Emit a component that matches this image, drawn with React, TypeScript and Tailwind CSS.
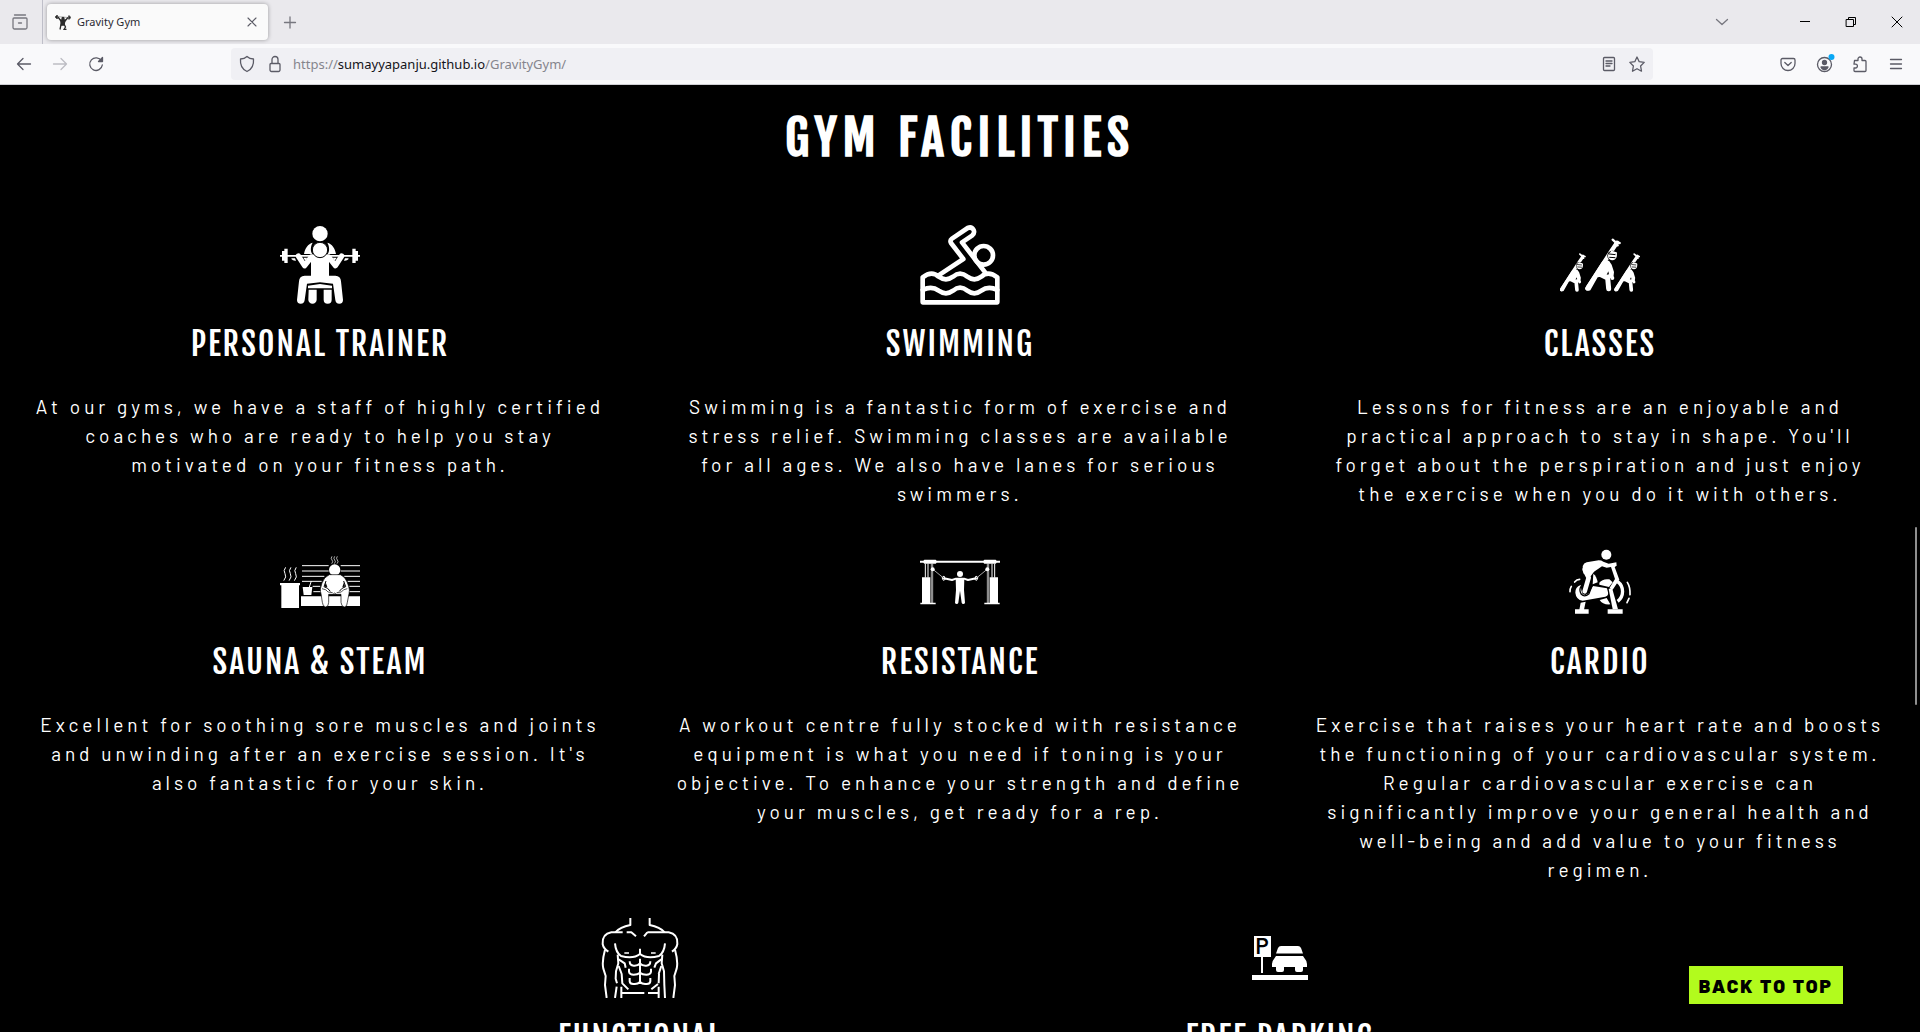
import type { ReactNode } from "react";

function TrainerIcon() {
  return (
    <svg viewBox="300 42 240 240" className="size-20" fill="white" aria-hidden="true">
      <circle cx="420" cy="71" r="23" />
      <path d="M372 132C375 114 384 102 398 98C391 110 391 124 397 132ZM468 132C465 114 456 102 442 98C449 110 449 124 443 132Z" />
      <path d="M300 135H540V140H300Z" />
      <path d="M306 123h7v29h-7zM313 116h10v43h-10zM517 116h10v43h-10zM527 123h7v29h-7z" />
      <path d="M335 145l10 0 3 7q-9 1-14-5zM505 145l-10 0-3 7q9 1 14-5zM370 143h12l-6 9zM470 143h-12l6 9z" />
      <path d="M355 138L374 167L394 141H446L466 167L485 138" fill="none" stroke="white" strokeWidth="16" strokeLinecap="round" strokeLinejoin="round" />
      <path d="M393 136h54v66h-54z" />
      <path d="M393 197H374Q358 198 357 214L351 270Q351 281 362 281Q373 281 374 270L381 221L420 217L459 221L466 270Q467 281 478 281Q489 281 489 270L483 214Q482 198 466 197Z" />
      <path d="M384 227L420 222L456 227V235H384Z" />
      <path d="M386 239h24v30a12 12 0 0 1-25 0zM431 239h24v30a12 12 0 0 1-24 0z" />
      <circle cx="420" cy="120" r="23" stroke="black" strokeWidth="3" />
    </svg>
  );
}

function SwimmingIcon() {
  return (
    <svg viewBox="120 42 240 240" className="size-20 overflow-visible" fill="none" stroke="white" strokeWidth="14" strokeLinecap="round" strokeLinejoin="round" aria-hidden="true">
      <circle cx="311" cy="136" r="28" />
      <path d="M179 194L250 147L213 99Q209 91 216 86L263 54Q275 49 281 60Q285 70 276 77L246 97L316 188" />
      <path d="M128 277V202Q155 181 176 200Q198 216 219 200Q240 182 262 200Q283 216 304 200Q325 181 352 202V277Z" />
      <path d="M128 240Q155 226 176 242Q198 258 219 242Q240 224 262 242Q283 258 304 242Q325 226 352 240" />
    </svg>
  );
}

function Stretcher({ x, y, s }: { x: number; y: number; s: number }) {
  return (
    <g transform={`translate(${x} ${y}) scale(${s})`} strokeLinecap="round" strokeLinejoin="round">
      <path d="M7 149L80 36L96 12" fill="none" stroke="white" strokeWidth="13" />
      <path d="M83 3L92 11L104 13M98 20L92 12" fill="none" stroke="white" strokeWidth="7" />
      <path d="M4 142L52 68L72 66L80 78L87 100L85 118L72 118L48 114L38 116L16 155Q2 160 1 149Z" />
      <path d="M48 108L68 118L71 150" fill="none" stroke="white" strokeWidth="15" />
      <path d="M70 98L65 108L72 107Z" fill="black" />
      <circle cx="82" cy="118" r="6" />
      <circle cx="82" cy="51" r="15" fill="black" />
      <circle cx="82" cy="52" r="13" />
      <path d="M73 46L92 48M74 56L90 57" stroke="black" strokeWidth="3" />
      <path d="M79 38L94 43L93 52" fill="none" stroke="white" strokeWidth="4" />
    </g>
  );
}

function ClassesIcon() {
  return (
    <svg viewBox="120 42 240 240" className="size-20" fill="white" aria-hidden="true">
      <Stretcher x={119} y={130} s={0.73} />
      <Stretcher x={195} y={86} s={1} />
      <Stretcher x={282} y={130} s={0.73} />
    </svg>
  );
}

function SaunaIcon() {
  return (
    <svg viewBox="240 9 240 240" className="size-20" fill="white" aria-hidden="true">
      <g fill="none" stroke="white" strokeWidth="3">
        <path d="M306 80H386M422 80H480M306 96H386M422 96H480M306 112H373M433 112H480M306 127H365M443 127H480M338 142H361M448 142H480M340 158H363M446 158H480" />
        <path d="M256 86q-7 9-1 18t-3 20M272 86q-7 9-1 18t-3 20M288 86q-7 9-1 18t-3 20" strokeLinecap="round" />
        <path d="M396 52q-5 6 0 11t-1 11M404 52q-5 6 0 11t-1 11M412 52q-5 6 0 11t-1 11" strokeWidth="2" />
        <path d="M334 126L328 144" />
      </g>
      <path d="M240 132h60v7h-3v68h-53v-68h-4zM308 144h29l-3 24h-23zM303 172h177v29h-177z" />
      <circle cx="404" cy="93" r="17" />
      <path d="M388 107Q372 114 366 132L361 150Q361 158 363 164L367 190Q368 203 377 204Q386 203 386 190V166H423V190Q424 203 433 204Q442 203 442 190L447 164Q450 154 446 142Q438 114 421 107Z" stroke="black" strokeWidth="2" />
      <path d="M378 126l-6 17q12 3 19 14M431 126l6 17q-12 3-19 14" fill="none" stroke="black" strokeWidth="3" />
      <path d="M377 130l5 14-8-1zM432 130l-5 14 8-1z" fill="black" />
      <path d="M366 149q14 2 18 10l14 2M442 149q-14 2-18 10l-14 2M398 167l6-5 6 5" fill="none" stroke="black" strokeWidth="2" />
    </svg>
  );
}

function ResistanceIcon() {
  return (
    <svg viewBox="150 9 240 240" className="size-20" fill="white" aria-hidden="true">
      <path d="M150 65h240v6h-240zM163 62h34l3 3v6l-3 3h-34l-3-3v-6zM343 62h34l3 3v6l-3 3h-34l-3-3v-6z" />
      <path d="M156 115h25v77h-25zM359 115h25v77h-25zM151 191h46v5h-46zM343 191h46v5h-46z" />
      <path d="M166 74v42M174 74v42M374 74v42M366 74v42" stroke="white" strokeWidth="3" />
      <path d="M184 74v118M188 74v118M352 74v118M356 74v118" stroke="white" strokeWidth="2" />
      <circle cx="188" cy="91" r="6" />
      <circle cx="352" cy="91" r="6" />
      <path d="M190 92L218 115M350 92L322 115" stroke="white" strokeWidth="2" />
      <path d="M222 111l-6 5 4 8 6-3zM318 111l6 5-4 8-6-3z" fill="none" stroke="white" strokeWidth="3" />
      <circle cx="270" cy="105" r="9" />
      <path d="M222 118L246 123L258 119H282L294 123L318 118" fill="none" stroke="white" strokeWidth="6" strokeLinejoin="round" strokeLinecap="round" />
      <path d="M257 117h26l-1 36 3 38q-1 4-5 4t-5-4l-5-36-5 36q-1 4-5 4t-5-4l3-38z" />
    </svg>
  );
}

function CardioIcon() {
  return (
    <svg viewBox="60 9 240 240" className="size-20" fill="white" aria-hidden="true">
      <circle cx="199" cy="47" r="15" />
      <path d="M131 104Q122 74 140 70L176 64Q184 64 190 68L206 74L229 70L230 80L224 84L238 122L218 152L209 146L225 120L213 84L200 86L186 82L162 98L152 112Z" />
      <path d="M134 92L146 116L134 157" fill="none" stroke="white" strokeWidth="14" strokeLinecap="round" strokeLinejoin="round" />
      <path d="M160 104Q170 112 173 130L158 136Z" />
      <path d="M233 128A37 37 0 0 1 233 187" fill="none" stroke="white" strokeWidth="10" />
      <path d="M178 131Q188 118 208 121L218 130L207 144L178 137ZM179 183L200 177L211 196Q188 198 179 183Z" />
      <path d="M122 138Q105 145 106 161Q108 182 128 185L196 173Q206 171 204 160L201 148L159 141L146 163L137 168L128 166L124 154Z" />
      <path d="M123 142Q116 153 124 166Q134 176 147 164L156 140" fill="none" stroke="black" strokeWidth="4" />
      <path d="M206 150L216 146L234 211H218Z" />
      <path d="M122 191L137 188L132 212H118ZM105 211h41v13h-41zM203 211h45v13h-45z" />
      <path d="M104 129Q110 121 119 121M90 158Q89 150 94 142M262 130Q271 144 270 167M267 178L261 191" fill="none" stroke="white" strokeWidth="5" strokeLinecap="round" />
    </svg>
  );
}

function FunctionalIcon() {
  return (
    <svg viewBox="180 54 240 240" className="size-20" fill="none" stroke="white" strokeWidth="6" strokeLinejoin="round" aria-hidden="true">
      <path d="M271 54V75Q240 81 226 97M329 54V75Q360 81 374 97" />
      <path d="M248 97H214Q186 102 188 132Q190 145 205 155M322 97H386Q414 102 412 132Q410 145 396 155M260 97H274L288 109M322 97L312 109" />
      <path d="M195 149Q185 185 190 206L197 228L195 255L200 294M405 149Q415 185 410 206L403 228L405 255L400 294" />
      <path d="M225 130Q227 157 243 168Q280 178 300 162Q320 178 357 168Q373 157 375 130M300 146V163" />
      <path d="M233 164L235 190L228 214L227 236L231 250M367 164L365 190L372 214L373 255L375 294M230 260L225 294M357 222L356 250" />
      <path d="M236 178L254 190L257 203M236 198L245 222L247 250L265 268M364 178L348 190L343 203M364 198L356 222M354 252L334 268" />
      <path d="M300 176V252M269 184Q269 197 281 197Q293 198 300 190Q307 198 319 197Q331 197 331 184M267 206V215Q269 224 281 224Q293 224 300 218Q307 224 319 224Q331 224 333 215V206M269 234V244Q270 253 282 252Q293 253 300 246Q307 253 318 252Q330 253 331 244V234" />
      <path d="M244 260V294M356 260V294M244 279H313M324 279H356" />
      <path d="M253 159H267M333 159H347" strokeWidth="5" />
    </svg>
  );
}

function ParkingIcon() {
  return (
    <svg viewBox="0 0 80 80" className="size-20" fill="white" aria-hidden="true">
      <path d="M14 18h17v21h-17zM21 39h2v16h-2zM12 57h56v5h-56z" />
      <path d="M41 28H58Q60 28 61 30L63 35.500H36L38 30Q39 28 41 28Z" />
      <path d="M36 38H63L65 41Q67 43 67 46V49H63V52Q63 54 61 54H57Q55 54 55 52V49H44V52Q44 54 42 54H38Q36 54 36 52V49H32V46Q32 43 34 41Z" />
      <text x="22" y="36" textAnchor="middle" fill="black" fontFamily="Barlow, sans-serif" fontWeight="600" fontSize="22">P</text>
    </svg>
  );
}

type Facility = { title: string; text: string; icon: ReactNode };

const facilities: Facility[] = [
  { title: "PERSONAL TRAINER", icon: <TrainerIcon />, text: "At our gyms, we have a staff of highly certified coaches who are ready to help you stay motivated on your fitness path." },
  { title: "SWIMMING", icon: <SwimmingIcon />, text: "Swimming is a fantastic form of exercise and stress relief. Swimming classes are available for all ages. We also have lanes for serious swimmers." },
  { title: "CLASSES", icon: <ClassesIcon />, text: "Lessons for fitness are an enjoyable and practical approach to stay in shape. You'll forget about the perspiration and just enjoy the exercise when you do it with others." },
  { title: "SAUNA & STEAM", icon: <SaunaIcon />, text: "Excellent for soothing sore muscles and joints and unwinding after an exercise session. It's also fantastic for your skin." },
  { title: "RESISTANCE", icon: <ResistanceIcon />, text: "A workout centre fully stocked with resistance equipment is what you need if toning is your objective. To enhance your strength and define your muscles, get ready for a rep." },
  { title: "CARDIO", icon: <CardioIcon />, text: "Exercise that raises your heart rate and boosts the functioning of your cardiovascular system. Regular cardiovascular exercise can significantly improve your general health and well-being and add value to your fitness regimen." },
  { title: "FUNCTIONAL", icon: <FunctionalIcon />, text: "" },
  { title: "FREE PARKING", icon: <ParkingIcon />, text: "" },
];

function FacilityCard({ facility }: { facility: Facility }) {
  return (
    <article className="flex w-1/3 flex-col items-center px-[33px] pb-[34px] text-center">
      {facility.icon}
      <h2 className="mt-5 font-['Fjalla_One',sans-serif] text-[32px] leading-[40px] font-normal tracking-[2px]">{facility.title}</h2>
      {facility.text && <p className="mt-7 text-[19px] leading-[29px] tracking-[4px]">{facility.text}</p>}
    </article>
  );
}

function ToolButton({ label, className, children }: { label: string; className: string; children: ReactNode }) {
  return (
    <button type="button" aria-label={label} className={`flex h-8 items-center justify-center ${className}`}>
      <svg viewBox="0 0 16 16" className="size-4 overflow-visible" fill="none" stroke="currentColor" strokeWidth="1.3" strokeLinecap="round" strokeLinejoin="round">
        {children}
      </svg>
    </button>
  );
}

function TabBar() {
  return (
    <div className="flex h-11 shrink-0 items-center bg-[#eae9ed] text-[#5b5b66]">
      <div className="flex h-full w-[43px] items-center border-r border-[#bfbfc9] pl-1">
        <ToolButton label="View recent browsing" className="w-8 text-[#77777f]">
          <path d="M2.500 1h11M2 4h12a1 1 0 0 1 1 1v8.500a1.500 1.500 0 0 1-1.500 1.500h-11A1.500 1.500 0 0 1 1 13.500V5a1 1 0 0 1 1-1zM6.500 9h3" />
        </ToolButton>
      </div>
      <div className="ml-1 flex h-9 w-[221px] items-center rounded bg-[#fafafa] pr-1 pl-2 shadow-[0_0_4px_rgba(0,0,0,0.35)]">
        <svg viewBox="0 0 16 16" className="size-4" fill="none" stroke="#2b2b2b" strokeWidth="1.300" aria-hidden="true">
          <path d="M2 2.500L13 3.500" stroke="#999" strokeWidth="0.800" />
          <path d="M3 3l3 4h4l3-3.500M5 15.500l1-5M6 11l3-1 1.500 3L9 15.500h2.500" />
          <path d="M6 6h4l-1 5H6z" fill="#2b2b2b" />
          <circle cx="8" cy="4.500" r="1" fill="#2b2b2b" />
          <path d="M2 1v4M1 2v2M14 1.500v4M15 2.500v2" strokeWidth="1.500" />
        </svg>
        <span className="ml-[6px] flex-1 pt-px text-[11px] text-[#2b2a33]">Gravity Gym</span>
        <ToolButton label="Close tab" className="w-6">
          <path d="M4 4l8 8M12 4l-8 8" strokeWidth="1.100" />
        </ToolButton>
      </div>
      <ToolButton label="New tab" className="ml-[6px] w-8 text-[#77777f]">
        <path d="M2.500 8.500h11M8 3v11" />
      </ToolButton>
      <div className="flex-1" />
      <ToolButton label="List all tabs" className="mr-11 w-8 text-[#77777f]">
        <path d="M2.500 5.500L8 10.500l5.500-5" />
      </ToolButton>
      <ToolButton label="Minimize" className="w-[46px] text-black">
        <path d="M3 7.500h10" strokeWidth="1" strokeLinecap="butt" />
      </ToolButton>
      <ToolButton label="Restore" className="w-[46px] text-black">
        <path d="M3.500 5.500h7v7h-7zM5.500 5.500v-2h7v7h-2" strokeWidth="1" />
      </ToolButton>
      <ToolButton label="Close window" className="w-[46px] text-black">
        <path d="M3 3l10 10M13 3L3 13" strokeWidth="1" />
      </ToolButton>
    </div>
  );
}

function NavBar() {
  return (
    <div className="flex h-[41px] shrink-0 items-center border-b border-[#cfcfd4] bg-[#f9f9fb] text-[#5b5b66]">
      <ToolButton label="Back" className="ml-[6px] w-9">
        <path d="M14.500 8H1.500M7 2.500L1.500 8L7 13.500" />
      </ToolButton>
      <ToolButton label="Forward" className="w-9 text-[#bdbdc3]">
        <path d="M1.500 8h13M9 2.500L14.500 8L9 13.500" />
      </ToolButton>
      <ToolButton label="Reload" className="w-9">
        <path d="M13.500 5A6.300 6.300 0 1 0 14.300 9" />
        <path d="M14.500 1.500V5.500H10.500Z" fill="currentColor" />
      </ToolButton>
      <div className="ml-[117px] flex h-8 flex-1 items-center rounded bg-[#f0f0f4]">
        <ToolButton label="Tracking protection" className="ml-[2px] w-7">
          <path d="M8 .500C6 2.500 3.500 3 1.500 3C1 9 3.500 13.500 8 15.500C12.500 13.500 15 9 14.500 3C12.500 3 10 2.500 8 .500Z" />
        </ToolButton>
        <ToolButton label="Site information" className="w-7">
          <path d="M4 7.500h8a1 1 0 0 1 1 1v5.500a1.500 1.500 0 0 1-1.500 1.500h-7A1.500 1.500 0 0 1 3 14V8.500a1 1 0 0 1 1-1zM5 7.500V3.500a3 3 0 0 1 6 0v4" />
        </ToolButton>
        <div className="ml-1 flex-1 pt-[2px] text-[13px] whitespace-nowrap text-[#85858d]">
          https://<span className="text-[#15141a]">sumayyapanju.github.io</span>/GravityGym/
        </div>
        <ToolButton label="Reader view" className="w-7">
          <path d="M3.500 1.500h9a1 1 0 0 1 1 1v11a1 1 0 0 1-1 1h-9a1 1 0 0 1-1-1v-11a1 1 0 0 1 1-1zM5 5h6M5 7.500h6M5 10h4" />
        </ToolButton>
        <ToolButton label="Bookmark this page" className="mr-[2px] w-7">
          <path d="M8 1l2.200 4.700 5 .700-3.600 3.600.900 5.200L8 12.700l-4.500 2.500.900-5.200L.800 6.400l5-.700z" />
        </ToolButton>
      </div>
      <ToolButton label="Save to Pocket" className="ml-[117px] w-9">
        <path d="M2.500 2.500h11a1.500 1.500 0 0 1 1.500 1.500v3.500a7 7 0 0 1-14 0V4a1.500 1.500 0 0 1 1.500-1.500zM4.800 6.500L8 9.500l3.200-3" />
      </ToolButton>
      <ToolButton label="Account" className="w-9">
        <circle cx="8.500" cy="8.500" r="7" />
        <circle cx="8.500" cy="6.500" r="2" fill="currentColor" />
        <path d="M5 11h7q-1 2.500-3.500 2.500T5 11z" fill="currentColor" />
        <circle cx="15.500" cy="1" r="3" fill="#0aa8f5" stroke="none" />
      </ToolButton>
      <ToolButton label="Extensions" className="w-9">
        <path d="M2.500 4.500H6V3a2 2 0 0 1 4 0v1.500h3a1 1 0 0 1 1 1v9a1 1 0 0 1-1 1H3a1 1 0 0 1-1-1V12h1.500a1.800 1.800 0 0 0 0-3.800H2z" />
      </ToolButton>
      <ToolButton label="Open application menu" className="mr-[6px] w-9">
        <path d="M2.500 3.500h11M2.500 8h11M2.500 12.500h11" />
      </ToolButton>
    </div>
  );
}

export default function App() {
  return (
    <div className="flex h-screen flex-col overflow-hidden bg-black font-['Noto_Sans',sans-serif]">
      <header>
        <TabBar />
        <NavBar />
      </header>
      <main className="relative min-h-0 flex-1 overflow-hidden bg-black pt-[23px] font-['Barlow',sans-serif] text-white">
        <h1 className="text-center font-['Fjalla_One',sans-serif] text-[48px] leading-[60px] font-bold tracking-[6px]">GYM FACILITIES</h1>
        <section className="mt-14 flex flex-wrap justify-center">
          {facilities.map((facility) => (
            <FacilityCard key={facility.title} facility={facility} />
          ))}
        </section>
        <a href="#top" className="absolute right-[77px] bottom-7 flex h-[38px] items-center bg-[#b2fb1d] px-[10px] pt-[2px] text-[19px] font-black tracking-[2px] text-black">
          BACK TO TOP
        </a>
        <div className="absolute top-[442px] right-[3px] h-[178px] w-[2px] rounded-full bg-[#8f8f8f]" />
      </main>
    </div>
  );
}
